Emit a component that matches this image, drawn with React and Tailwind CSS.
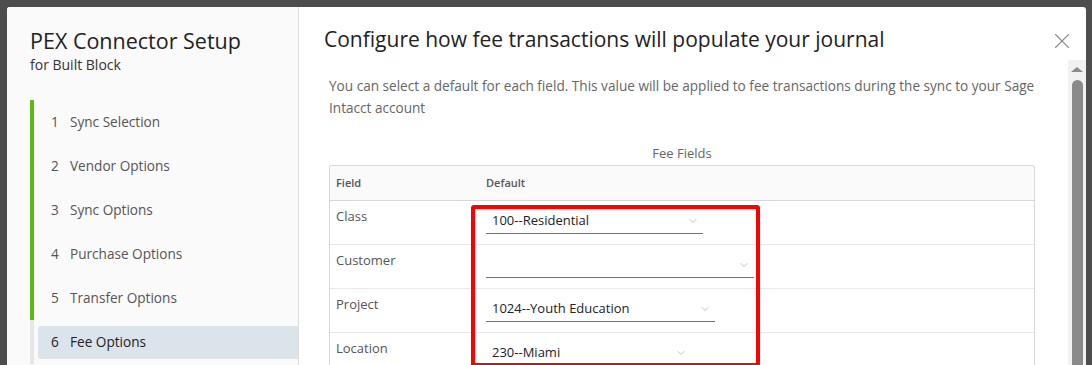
import { X, ChevronDown } from "lucide-react";

const steps = [
  { n: 1, label: "Sync Selection", done: true },
  { n: 2, label: "Vendor Options", done: true },
  { n: 3, label: "Sync Options", done: true },
  { n: 4, label: "Purchase Options", done: true },
  { n: 5, label: "Transfer Options", done: true },
  { n: 6, label: "Fee Options", active: true },
];

const rows = [
  { field: "Class", value: "100--Residential", w: "w-[217px]" },
  { field: "Customer", value: "", w: "w-[268px]" },
  { field: "Project", value: "1024--Youth Education", w: "w-[229px]" },
  { field: "Location", value: "230--Miami", w: "w-[205px]" },
];

function Select({ value, w }) {
  return (
    <div className={`${w} h-[25px] border-b border-[#6a7378] flex items-center justify-between pl-[6px] pr-[4px]`}>
      <span className="text-[13px] text-[#222]">{value}</span>
      <ChevronDown size={12} strokeWidth={1.25} className="text-[#9aa0a4]" />
    </div>
  );
}

export default function App() {
  return (
    <div className="h-[365px] w-[1092px] bg-[#4d4d4d] pt-[7px] pl-[7px] overflow-hidden font-['Open_Sans',sans-serif]">
      <div className="relative flex h-[400px] w-[1079px] rounded-t-[3px] bg-white overflow-hidden">
        {/* sidebar */}
        <aside className="w-[292px] shrink-0 bg-[#fafafa] border-r border-[#dddddd] pt-[21px]">
          <h1 className="pl-[23px] text-[21.5px] leading-[26px] text-[#222]">PEX Connector Setup</h1>
          <p className="pl-[23px] mt-[2px] text-[14px] leading-[18px] text-[#333]">for Built Block</p>
          <ul className="mt-[26px] ml-[23px]">
            {steps.map((s) => (
              <li key={s.n} className={`flex items-center h-[44px] border-l-[4px] ${s.done ? "border-[#5eb715]" : "border-[#e6e6e6]"} pl-[4px]`}>
                <div className={`flex flex-1 items-center h-[33px] ${s.active ? "bg-[#dbe4ea] rounded-l-[3px] text-[#222]" : "text-[#555]"} pl-[13px] text-[13.6px]`}>
                  <span className="w-[19px]">{s.n}</span>
                  <span>{s.label}</span>
                </div>
              </li>
            ))}
          </ul>
        </aside>

        {/* main */}
        <main className="flex-1 pt-[19px] pl-[25px] pr-[36px]">
          <h2 className="text-[21px] leading-[26px] text-[#222]">Configure how fee transactions will populate your journal</h2>
          <p className="mt-[23px] ml-[5px] text-[13.6px] leading-[22px] text-[#666]">
            You can select a default for each field. This value will be applied to fee transactions during the sync to your Sage Intacct account
          </p>
          <div className="ml-[5px] w-[706px]">
            <div className="mt-[26px] text-center text-[13px] leading-[16px] text-[#666]">Fee Fields</div>
            <div className="mt-[4px] border border-[#d7d7d7] rounded-t-[2px]">
              <div className="flex h-[35px] items-center bg-[#fafafa] border-b border-[#d7d7d7] text-[11px] font-semibold text-[#565656]">
                <span className="w-[156px] pl-[6px]">Field</span>
                <span>Default</span>
              </div>
              {rows.map((r) => (
                <div key={r.field} className="flex h-[44px] border-b border-[#e8e8e8]">
                  <span className="w-[156px] pl-[6px] pt-[6px] text-[13px] text-[#555]">{r.field}</span>
                  <div className="pt-[8px]">
                    <Select value={r.value} w={r.w} />
                  </div>
                </div>
              ))}
            </div>
          </div>
        </main>

        {/* close */}
        <button className="absolute left-[1042px] top-[21px] text-[#8c8c8c]">
          <X size={26} strokeWidth={1} />
        </button>

        {/* scrollbar */}
        <div className="absolute left-[1061px] top-[53px] w-[18px] h-[360px] bg-[#f1f1f1]">
          <div className="mx-auto mt-[7px] h-0 w-0 border-x-[6px] border-x-transparent border-b-[5px] border-b-[#8a8a8a]" />
          <div className="mx-auto mt-[8px] h-[300px] w-[11px] rounded-t-full bg-[#8a8a8a]" />
        </div>

        {/* highlight */}
        <div className="absolute left-[464px] top-[198px] w-[289px] h-[162px] border-[4px] border-[#ff0000] rounded-[3px]" />
      </div>
    </div>
  );
}
